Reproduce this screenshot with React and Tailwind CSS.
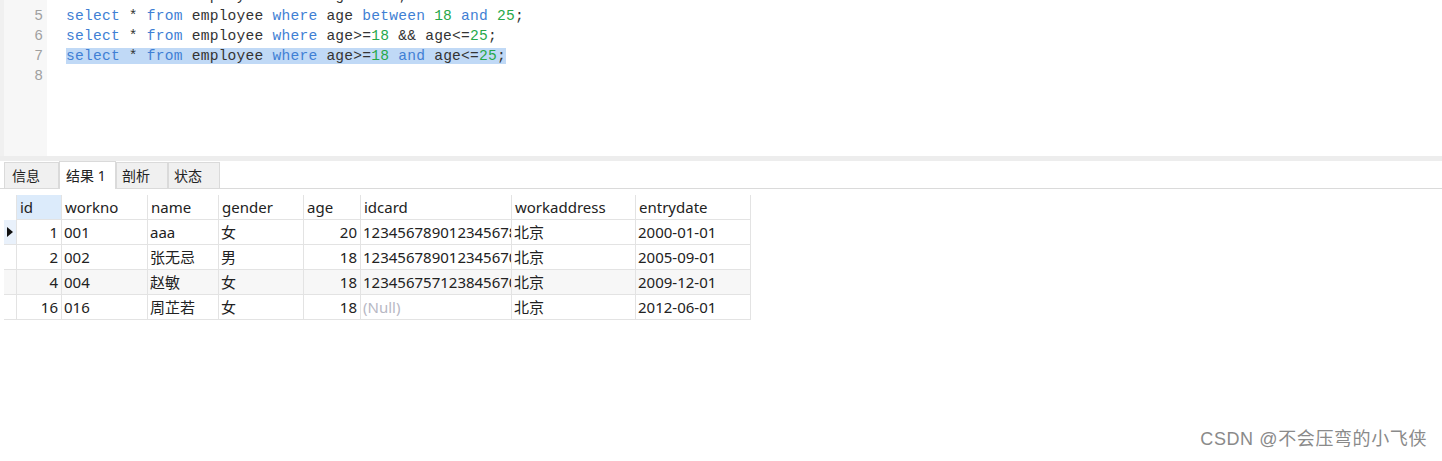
import React from "react";

const mono = { fontFamily: '"Liberation Mono", "DejaVu Sans Mono", monospace' };

const K = ({ children }) => <span className="text-[#3f7fd4]">{children}</span>;
const N = ({ children }) => <span className="text-[#26a84a]">{children}</span>;

const codeLines = [
  {
    no: 4,
    body: (
      <>
        <K>select</K> * <K>from</K> employee <K>where</K> age &gt; <N>18</N>;
      </>
    ),
  },
  {
    no: 5,
    body: (
      <>
        <K>select</K> * <K>from</K> employee <K>where</K> age <K>between</K> <N>18</N> <K>and</K> <N>25</N>;
      </>
    ),
  },
  {
    no: 6,
    body: (
      <>
        <K>select</K> * <K>from</K> employee <K>where</K> age&gt;=<N>18</N> &amp;&amp; age&lt;=<N>25</N>;
      </>
    ),
  },
  {
    no: 7,
    selected: true,
    body: (
      <>
        <K>select</K> * <K>from</K> employee <K>where</K> age&gt;=<N>18</N> <K>and</K> age&lt;=<N>25</N>;
      </>
    ),
  },
  { no: 8, body: "" },
];

const columns = [
  { key: "id", label: "id", w: "w-[45px]", right: true },
  { key: "workno", label: "workno", w: "w-[86px]" },
  { key: "name", label: "name", w: "w-[71px]" },
  { key: "gender", label: "gender", w: "w-[85px]" },
  { key: "age", label: "age", w: "w-[57px]", right: true },
  { key: "idcard", label: "idcard", w: "w-[151px]" },
  { key: "workaddress", label: "workaddress", w: "w-[124px]" },
  { key: "entrydate", label: "entrydate", w: "w-[115px]" },
];

const rows = [
  { id: "1", workno: "001", name: "aaa", gender: "女", age: "20", idcard: "123456789012345678", workaddress: "北京", entrydate: "2000-01-01" },
  { id: "2", workno: "002", name: "张无忌", gender: "男", age: "18", idcard: "123456789012345670", workaddress: "北京", entrydate: "2005-09-01" },
  { id: "4", workno: "004", name: "赵敏", gender: "女", age: "18", idcard: "123456757123845670", workaddress: "北京", entrydate: "2009-12-01" },
  { id: "16", workno: "016", name: "周芷若", gender: "女", age: "18", idcard: null, workaddress: "北京", entrydate: "2012-06-01" },
];

const tabs = ["信息", "结果 1", "剖析", "状态"];

export default function App() {
  return (
    <div
      className="w-[1442px] h-[461px] bg-white overflow-hidden flex flex-col relative"
      style={{ fontFamily: '"Noto Sans", "Noto Sans CJK SC", sans-serif' }}
    >
      {/* EDITOR */}
      <div className="h-[156px] flex overflow-hidden">
        <div className="w-[4px] bg-[#f0f0f0]" />
        <div className="w-[43px] bg-[#f7f7f7]" />
        <div className="flex-1" />
      </div>
      <div className="absolute left-0 top-0 w-full h-[156px] overflow-hidden">
        <div className="-mt-[14px]" style={mono}>
          {codeLines.map((l) => (
            <div key={l.no} className="flex h-[20px] items-center text-[14.6px] leading-[20px]">
              <span className="w-[45px] pr-[2px] text-right text-[#a0a0a0]">{l.no}</span>
              <span className="ml-[21px] text-[#333333] tracking-[0.22px]">
                <span className={l.selected ? "bg-[#c0d9f6]" : ""}>{l.body}</span>
              </span>
            </div>
          ))}
        </div>
      </div>

      <div className="h-[5px] bg-[#ededed]" />

      {/* TABS */}
      <div className="h-[28px] flex items-end border-b border-[#dadada] pl-[4px]">
        {tabs.map((t, i) =>
          i === 1 ? (
            <div
              key={t}
              className="h-[28px] w-[57px] -mb-px bg-white border border-b-0 border-[#dadada] text-[14px] text-[#222] pl-[6px] pt-[3px]"
            >
              {t}
            </div>
          ) : (
            <div
              key={t}
              className={`h-[26px] bg-[#f0f0f0] border border-b-0 border-[#dadada] text-[14px] text-[#222] pt-[2px] ${
                i === 0 ? "w-[55px] pl-[7px]" : "w-[52px] pl-[5px]"
              }`}
            >
              {t}
            </div>
          )
        )}
      </div>

      {/* GRID */}
      <div className="pl-[4px] pt-[6px]">
        <div className="flex w-fit h-[25px] text-[15px] text-[#222]">
          <div className="w-[13px] border-r border-[#e3e3e3]" />
          {columns.map((c, i) => (
            <div
              key={c.key}
              className={`${c.w} border-r border-b border-[#e3e3e3] pl-[3px] leading-[24px] ${
                i === 0 ? "bg-[#dcebfb]" : ""
              }`}
            >
              {c.label}
            </div>
          ))}
        </div>
        {rows.map((r, ri) => (
          <div
            key={r.id}
            className={`flex w-fit h-[25px] text-[15px] text-[#222] ${ri === 2 ? "bg-[#f7f7f7]" : ""}`}
          >
            <div
              className={`w-[13px] border-r border-b border-[#e3e3e3] flex items-center justify-center ${
                ri === 0 ? "bg-[#e9f1fb]" : ""
              }`}
            >
              {ri === 0 && (
                <svg width="6" height="10" viewBox="0 0 6 10">
                  <path d="M0 0 L6 5 L0 10 Z" fill="#111" />
                </svg>
              )}
            </div>
            {columns.map((c) => {
              const v = r[c.key];
              return (
                <div
                  key={c.key}
                  className={`${c.w} border-r border-b border-[#e3e3e3] leading-[24px] overflow-hidden whitespace-nowrap ${
                    c.right ? "text-right pr-[3px]" : "pl-[2px]"
                  }`}
                >
                  {v === null ? <span className="text-[#b8b8c4]">(Null)</span> : v}
                </div>
              );
            })}
          </div>
        ))}
      </div>

      {/* WATERMARK */}
      <div
        className="absolute right-[15px] bottom-[8px] text-[18px] tracking-[0.6px] text-[#8a8a8a]"
        style={{ fontFamily: '"Liberation Sans", "Noto Sans CJK SC", sans-serif', textShadow: "0 0 2px #fff" }}
      >
        CSDN @不会压弯的小飞侠
      </div>
    </div>
  );
}
